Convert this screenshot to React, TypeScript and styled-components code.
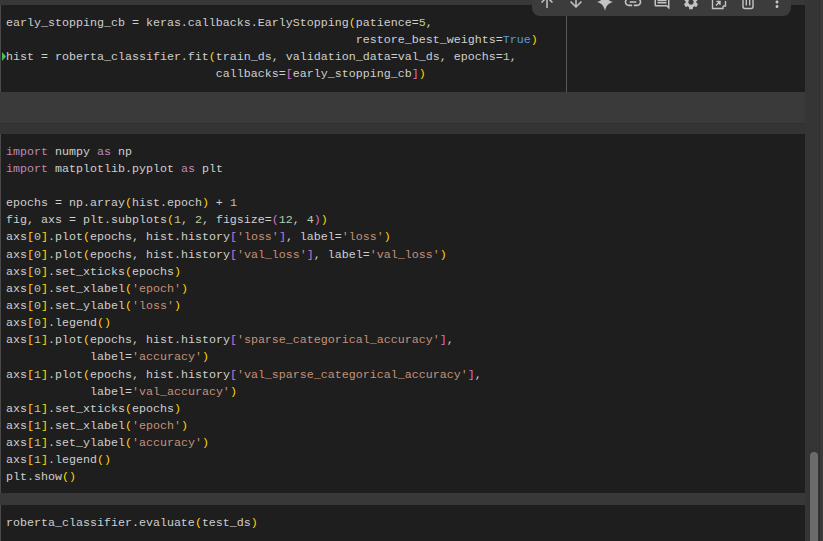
import React from 'react';
import styled, { createGlobalStyle } from 'styled-components';
import {
  MdArrowUpward,
  MdArrowDownward,
  MdLink,
  MdOutlineComment,
  MdSettings,
  MdMoreVert,
} from 'react-icons/md';

const GlobalStyle = createGlobalStyle`
  html, body {
    margin: 0;
    padding: 0;
    background: #383838;
  }
`;

const Page = styled.div`
  width: 823px;
  height: 541px;
  display: flex;
  overflow: hidden;
  position: relative;
  background: #383838;
`;

const Notebook = styled.div`
  width: 805px;
  display: flex;
  flex-direction: column;
  padding-top: 5px;
`;

const Cell = styled.div<{ $height: number }>`
  height: ${(p) => p.$height}px;
  flex: none;
  position: relative;
  box-sizing: border-box;
  padding: 9.7px 0 0 5px;
  background: #1e1e1e;
  border-left: 1px solid #4a4a4a;
  overflow: hidden;
`;

const Code = styled.pre`
  margin: 0;
  font-family: 'Liberation Mono', monospace;
  font-size: 11.67px;
  line-height: 17.14px;
  color: #cfcfcf;
`;

const Kw = styled.span`
  color: #bd8ab8;
`;
const Str = styled.span`
  color: #c4927a;
`;
const Num = styled.span`
  color: #b5cea8;
`;
const Const = styled.span`
  color: #569cd6;
`;
const Gold = styled.span`
  color: #ffd700;
`;
const Orchid = styled.span`
  color: #da70d6;
`;

const Gap = styled.div<{ $height: number }>`
  height: ${(p) => p.$height}px;
  flex: none;
`;

const OutputGap = styled.div`
  height: 42px;
  flex: none;
  background: linear-gradient(#3a3a3a 0 31px, #2f2f2f 31px 32px, #343434 32px);
`;

const Ruler = styled.div`
  position: absolute;
  left: 565px;
  top: 0;
  bottom: 0;
  width: 1px;
  background: #5a5a5a;
`;

const RunMarker = styled.svg`
  position: absolute;
  left: 0;
  top: 47px;
`;

const Rail = styled.div`
  width: 14px;
  height: 100%;
  display: flex;
  justify-content: flex-end;
  padding-top: 452px;
  box-sizing: border-box;
  background: #353535;
`;

const Thumb = styled.div`
  width: 8px;
  height: 120px;
  margin-right: 1px;
  border-radius: 4px 4px 0 0;
  background: #6b6b6b;
`;

const Edge = styled.div`
  flex: 1;
  background: #3a3a3a;
  border-left: 1px solid #2e2e2e;
`;

const Toolbar = styled.div`
  position: absolute;
  left: 532px;
  top: -10px;
  width: 259px;
  height: 26px;
  box-sizing: border-box;
  padding: 0 0 3px 1px;
  display: flex;
  align-items: center;
  border-radius: 8px;
  background: #3c3c3c;
  color: #c4c4c4;
`;

const ToolButton = styled.div`
  width: 28.7px;
  flex: none;
  display: flex;
  justify-content: center;
  align-items: center;
`;

function Sparkle() {
  return (
    <svg width="18" height="18" viewBox="0 0 18 18" fill="currentColor">
      <path d="M9 0C9.8 5 12.500 8 17 9 12.500 10 9.800 13 9 18 8.200 13 5.500 10 1 9 5.500 8 8.200 5 9 0Z" />
    </svg>
  );
}

function ExportBox() {
  return (
    <svg width="18" height="18" viewBox="0 0 18 18" fill="none" stroke="currentColor" strokeWidth="1.4">
      <path d="M2.500 2v13.500h10.500v-2.500M15.500 8v5H13" />
      <path d="M6 12.500l4-4M6.500 8.500H10V12" />
    </svg>
  );
}

function TrashCan() {
  return (
    <svg width="18" height="18" viewBox="0 0 18 18" fill="none" stroke="currentColor" strokeWidth="1.4">
      <path d="M4 2v11.500c0 1.200.8 2 2 2h6c1.200 0 2-.8 2-2V2" />
      <path d="M7.300 4v8.500M10.700 4v8.500" />
    </svg>
  );
}

const toolIcons = [
  <MdArrowUpward size={18} />,
  <MdArrowDownward size={18} />,
  <Sparkle />,
  <MdLink size={20} />,
  <MdOutlineComment size={18} />,
  <MdSettings size={18} />,
  <ExportBox />,
  <TrashCan />,
  <MdMoreVert size={18} />,
];

export default function App() {
  return (
    <Page>
      <GlobalStyle />
      <Notebook>
        <Cell $height={87}>
          <Code>
            early_stopping_cb = keras.callbacks.EarlyStopping<Gold>(</Gold>patience=<Num>5</Num>,{'\n'}
            {' '.repeat(50)}restore_best_weights=<Const>True</Const><Gold>)</Gold>{'\n'}
            hist = roberta_classifier.fit<Gold>(</Gold>train_ds, validation_data=val_ds, epochs=<Num>1</Num>,{'\n'}
            {' '.repeat(30)}callbacks=<Orchid>[</Orchid>early_stopping_cb<Orchid>]</Orchid><Gold>)</Gold>
          </Code>
          <Ruler />
          <RunMarker width="5" height="9" viewBox="0 0 5 9">
            <path d="M1 0l4 4.500-4 4.500z" fill="#4ec05a" />
          </RunMarker>
        </Cell>
        <OutputGap />
        <Cell $height={359}>
          <Code>
            <Kw>import</Kw> numpy <Kw>as</Kw> np{'\n'}
            <Kw>import</Kw> matplotlib.pyplot <Kw>as</Kw> plt{'\n'}
            {'\n'}
            epochs = np.array<Gold>(</Gold>hist.epoch<Gold>)</Gold> + <Num>1</Num>{'\n'}
            fig, axs = plt.subplots<Gold>(</Gold><Num>1</Num>, <Num>2</Num>, figsize=<Orchid>(</Orchid><Num>12</Num>, <Num>4</Num><Orchid>)</Orchid><Gold>)</Gold>{'\n'}
            axs<Gold>[</Gold><Num>0</Num><Gold>]</Gold>.plot<Gold>(</Gold>epochs, hist.history<Orchid>[</Orchid><Str>'loss'</Str><Orchid>]</Orchid>, label=<Str>'loss'</Str><Gold>)</Gold>{'\n'}
            axs<Gold>[</Gold><Num>0</Num><Gold>]</Gold>.plot<Gold>(</Gold>epochs, hist.history<Orchid>[</Orchid><Str>'val_loss'</Str><Orchid>]</Orchid>, label=<Str>'val_loss'</Str><Gold>)</Gold>{'\n'}
            axs<Gold>[</Gold><Num>0</Num><Gold>]</Gold>.set_xticks<Gold>(</Gold>epochs<Gold>)</Gold>{'\n'}
            axs<Gold>[</Gold><Num>0</Num><Gold>]</Gold>.set_xlabel<Gold>(</Gold><Str>'epoch'</Str><Gold>)</Gold>{'\n'}
            axs<Gold>[</Gold><Num>0</Num><Gold>]</Gold>.set_ylabel<Gold>(</Gold><Str>'loss'</Str><Gold>)</Gold>{'\n'}
            axs<Gold>[</Gold><Num>0</Num><Gold>]</Gold>.legend<Gold>()</Gold>{'\n'}
            axs<Gold>[</Gold><Num>1</Num><Gold>]</Gold>.plot<Gold>(</Gold>epochs, hist.history<Orchid>[</Orchid><Str>'sparse_categorical_accuracy'</Str><Orchid>]</Orchid>,{'\n'}
            {' '.repeat(12)}label=<Str>'accuracy'</Str><Gold>)</Gold>{'\n'}
            axs<Gold>[</Gold><Num>1</Num><Gold>]</Gold>.plot<Gold>(</Gold>epochs, hist.history<Orchid>[</Orchid><Str>'val_sparse_categorical_accuracy'</Str><Orchid>]</Orchid>,{'\n'}
            {' '.repeat(12)}label=<Str>'val_accuracy'</Str><Gold>)</Gold>{'\n'}
            axs<Gold>[</Gold><Num>1</Num><Gold>]</Gold>.set_xticks<Gold>(</Gold>epochs<Gold>)</Gold>{'\n'}
            axs<Gold>[</Gold><Num>1</Num><Gold>]</Gold>.set_xlabel<Gold>(</Gold><Str>'epoch'</Str><Gold>)</Gold>{'\n'}
            axs<Gold>[</Gold><Num>1</Num><Gold>]</Gold>.set_ylabel<Gold>(</Gold><Str>'accuracy'</Str><Gold>)</Gold>{'\n'}
            axs<Gold>[</Gold><Num>1</Num><Gold>]</Gold>.legend<Gold>()</Gold>{'\n'}
            plt.show<Gold>()</Gold>
          </Code>
        </Cell>
        <Gap $height={12} />
        <Cell $height={36}>
          <Code>
            roberta_classifier.evaluate<Gold>(</Gold>test_ds<Gold>)</Gold>
          </Code>
        </Cell>
      </Notebook>
      <Rail>
        <Thumb />
      </Rail>
      <Edge />
      <Toolbar>
        {toolIcons.map((icon, i) => (
          <ToolButton key={i}>{icon}</ToolButton>
        ))}
      </Toolbar>
    </Page>
  );
}
